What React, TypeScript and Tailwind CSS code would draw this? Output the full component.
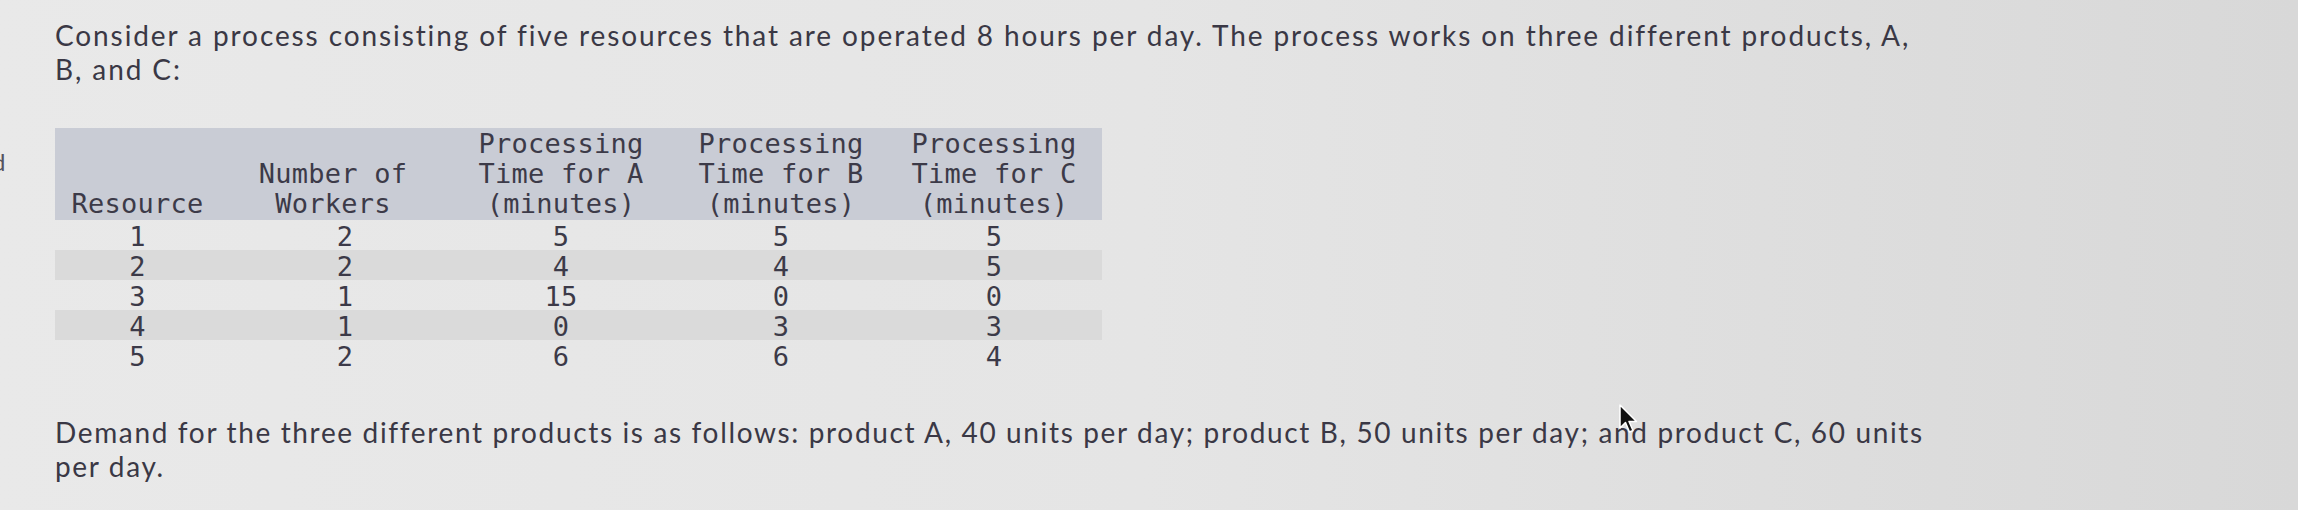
const headers = [
  ["", "", "Resource"],
  ["", "Number of", "Workers"],
  ["Processing", "Time for A", "(minutes)"],
  ["Processing", "Time for B", "(minutes)"],
  ["Processing", "Time for C", "(minutes)"],
];

const rows = [
  ["1", "2", "5", "5", "5"],
  ["2", "2", "4", "4", "5"],
  ["3", "1", "15", "0", "0"],
  ["4", "1", "0", "3", "3"],
  ["5", "2", "6", "6", "4"],
];

// column widths taken from the header band
const colWidths = ["w-[165px]", "w-[226px]", "w-[230px]", "w-[210px]", "w-[216px]"];

export default function App() {
  return (
    <main className="relative w-[2298px] h-[510px] overflow-hidden bg-linear-to-r from-[#e9e9e9] via-[#e5e5e5] to-[#d8d8d8] font-['Lato',sans-serif] text-[#3a3845]">
      {/* cut-off letter on the left edge */}
      <span className="absolute left-[-8px] top-[150px] font-['Lato',sans-serif] text-[24px] leading-none text-[#55535e]">
        d
      </span>

      <div className="pl-[55px] pt-[18px]">
        {/* Intro */}
        <p className="text-[28px] leading-[34px] tracking-[1.9px] whitespace-nowrap">
          <span className="block">
            Consider a process consisting of five resources that are operated 8 hours per day. The process works on three different products, A,
          </span>
          <span className="block">B, and C:</span>
        </p>

        {/* Table */}
        <div className="mt-[42px] w-[1047px] font-['DejaVu_Sans_Mono',monospace] text-[27px] leading-[30px] tracking-[0.25px] text-[#3c3a48]">
          <div className="flex items-end h-[92px] bg-[#c9ccd5] pt-px pb-[1px]">
            {headers.map((h, i) => (
              <div key={i} className={`${colWidths[i]} flex flex-col items-center`}>
                {h.map((line, j) => (
                  <span key={j} className="block h-[30px] whitespace-pre">
                    {line}
                  </span>
                ))}
              </div>
            ))}
          </div>
          {rows.map((r, i) => (
            <div key={i} className={`flex h-[30px] pt-[2px] ${i % 2 === 1 ? "bg-[#dadada]" : ""}`}>
              {r.map((v, j) => (
                <div key={j} className={`${colWidths[j]} text-center ${j === 1 ? "pl-[24px]" : ""}`}>
                  {v}
                </div>
              ))}
            </div>
          ))}
        </div>

        {/* Demand */}
        <p className="mt-[45px] text-[28px] leading-[34px] tracking-[1.65px] whitespace-nowrap">
          <span className="block">
            Demand for the three different products is as follows: product A, 40 units per day; product B, 50 units per day; and product C, 60 units
          </span>
          <span className="block">per day.</span>
        </p>
      </div>

      {/* mouse pointer */}
      <svg className="absolute left-[1619px] top-[404px]" width="20" height="30" viewBox="0 0 20 30">
        <path d="M1 1 L1 24 L6.5 18.5 L10.5 28 L14 26.5 L10 17.5 L17.5 17.5 Z" fill="#111" stroke="#fff" strokeWidth="1.5" strokeLinejoin="round" />
      </svg>
    </main>
  );
}
